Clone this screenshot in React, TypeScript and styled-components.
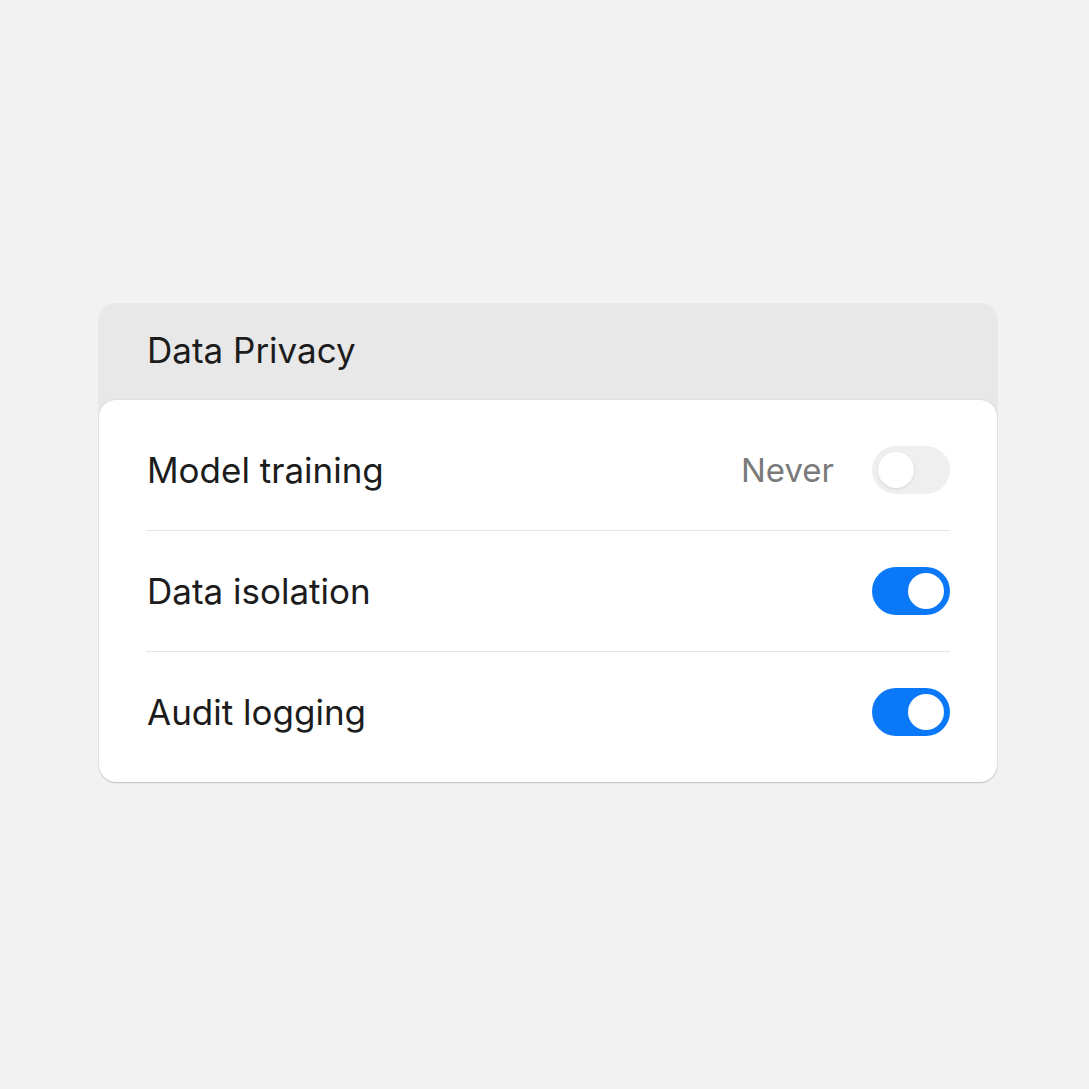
import React, { useState } from "react";
import styled, { createGlobalStyle } from "styled-components";

const GlobalStyle = createGlobalStyle`
  html, body {
    margin: 0;
    padding: 0;
    background: #f2f2f2;
    font-family: Inter, "Noto Sans", sans-serif;
    -webkit-font-smoothing: antialiased;
  }
`;

const Page = styled.div`
  width: 1089px;
  height: 1089px;
  display: flex;
  align-items: center;
  justify-content: center;
  box-sizing: border-box;
  padding: 0 0 3px 7px;
`;

const Card = styled.section`
  width: 900px;
  box-sizing: border-box;
  background: #e8e8e8;
  border-radius: 18px;
  padding: 0 1px 1px;
  display: flex;
  flex-direction: column;
`;

const Header = styled.h2`
  margin: 0;
  height: 97px;
  box-sizing: border-box;
  display: flex;
  align-items: center;
  padding: 0 48px 4px;
  font-size: 35px;
  font-weight: 400;
  color: #1c1c1c;
  letter-spacing: 0;
`;

const Panel = styled.div`
  background: #ffffff;
  border-radius: 17px;
  padding: 10px 47px;
  box-shadow: 0 0.5px 1.5px rgba(0, 0, 0, 0.18);
  display: flex;
  flex-direction: column;
`;

const Row = styled.div<{ $last?: boolean }>`
  height: 120px;
  display: flex;
  align-items: center;
  border-bottom: ${(p) => (p.$last ? "none" : "1px solid #e6e6e6")};
`;

const Label = styled.span`
  flex: 1;
  font-size: 35px;
  color: #1c1c1c;
  padding-left: 1px;
`;

const Value = styled.span`
  font-size: 33px;
  color: #7a7a7a;
  margin-right: 38px;
`;

const Track = styled.button<{ $on: boolean }>`
  width: 78px;
  height: 48px;
  border: none;
  padding: 6px;
  border-radius: 24px;
  background: ${(p) => (p.$on ? "#0a78f7" : "#efefef")};
  display: flex;
  justify-content: ${(p) => (p.$on ? "flex-end" : "flex-start")};
  align-items: center;
  cursor: pointer;
  box-sizing: border-box;
`;

const Knob = styled.span<{ $on: boolean }>`
  width: 36px;
  height: 36px;
  border-radius: 50%;
  background: #ffffff;
  box-shadow: ${(p) => (p.$on ? "none" : "0 1px 3px rgba(0,0,0,0.12)")};
`;

function Toggle({ initial }: { initial: boolean }) {
  const [on, setOn] = useState(initial);
  return (
    <Track $on={on} onClick={() => setOn(!on)} aria-pressed={on}>
      <Knob $on={on} />
    </Track>
  );
}

const rows = [
  { label: "Model training", value: "Never", on: false },
  { label: "Data isolation", on: true },
  { label: "Audit logging", on: true },
];

export default function App() {
  return (
    <>
      <GlobalStyle />
      <Page>
        <Card>
          <Header>Data Privacy</Header>
          <Panel>
            {rows.map((r, i) => (
              <Row key={r.label} $last={i === rows.length - 1}>
                <Label>{r.label}</Label>
                {r.value && <Value>{r.value}</Value>}
                <Toggle initial={r.on} />
              </Row>
            ))}
          </Panel>
        </Card>
      </Page>
    </>
  );
}
